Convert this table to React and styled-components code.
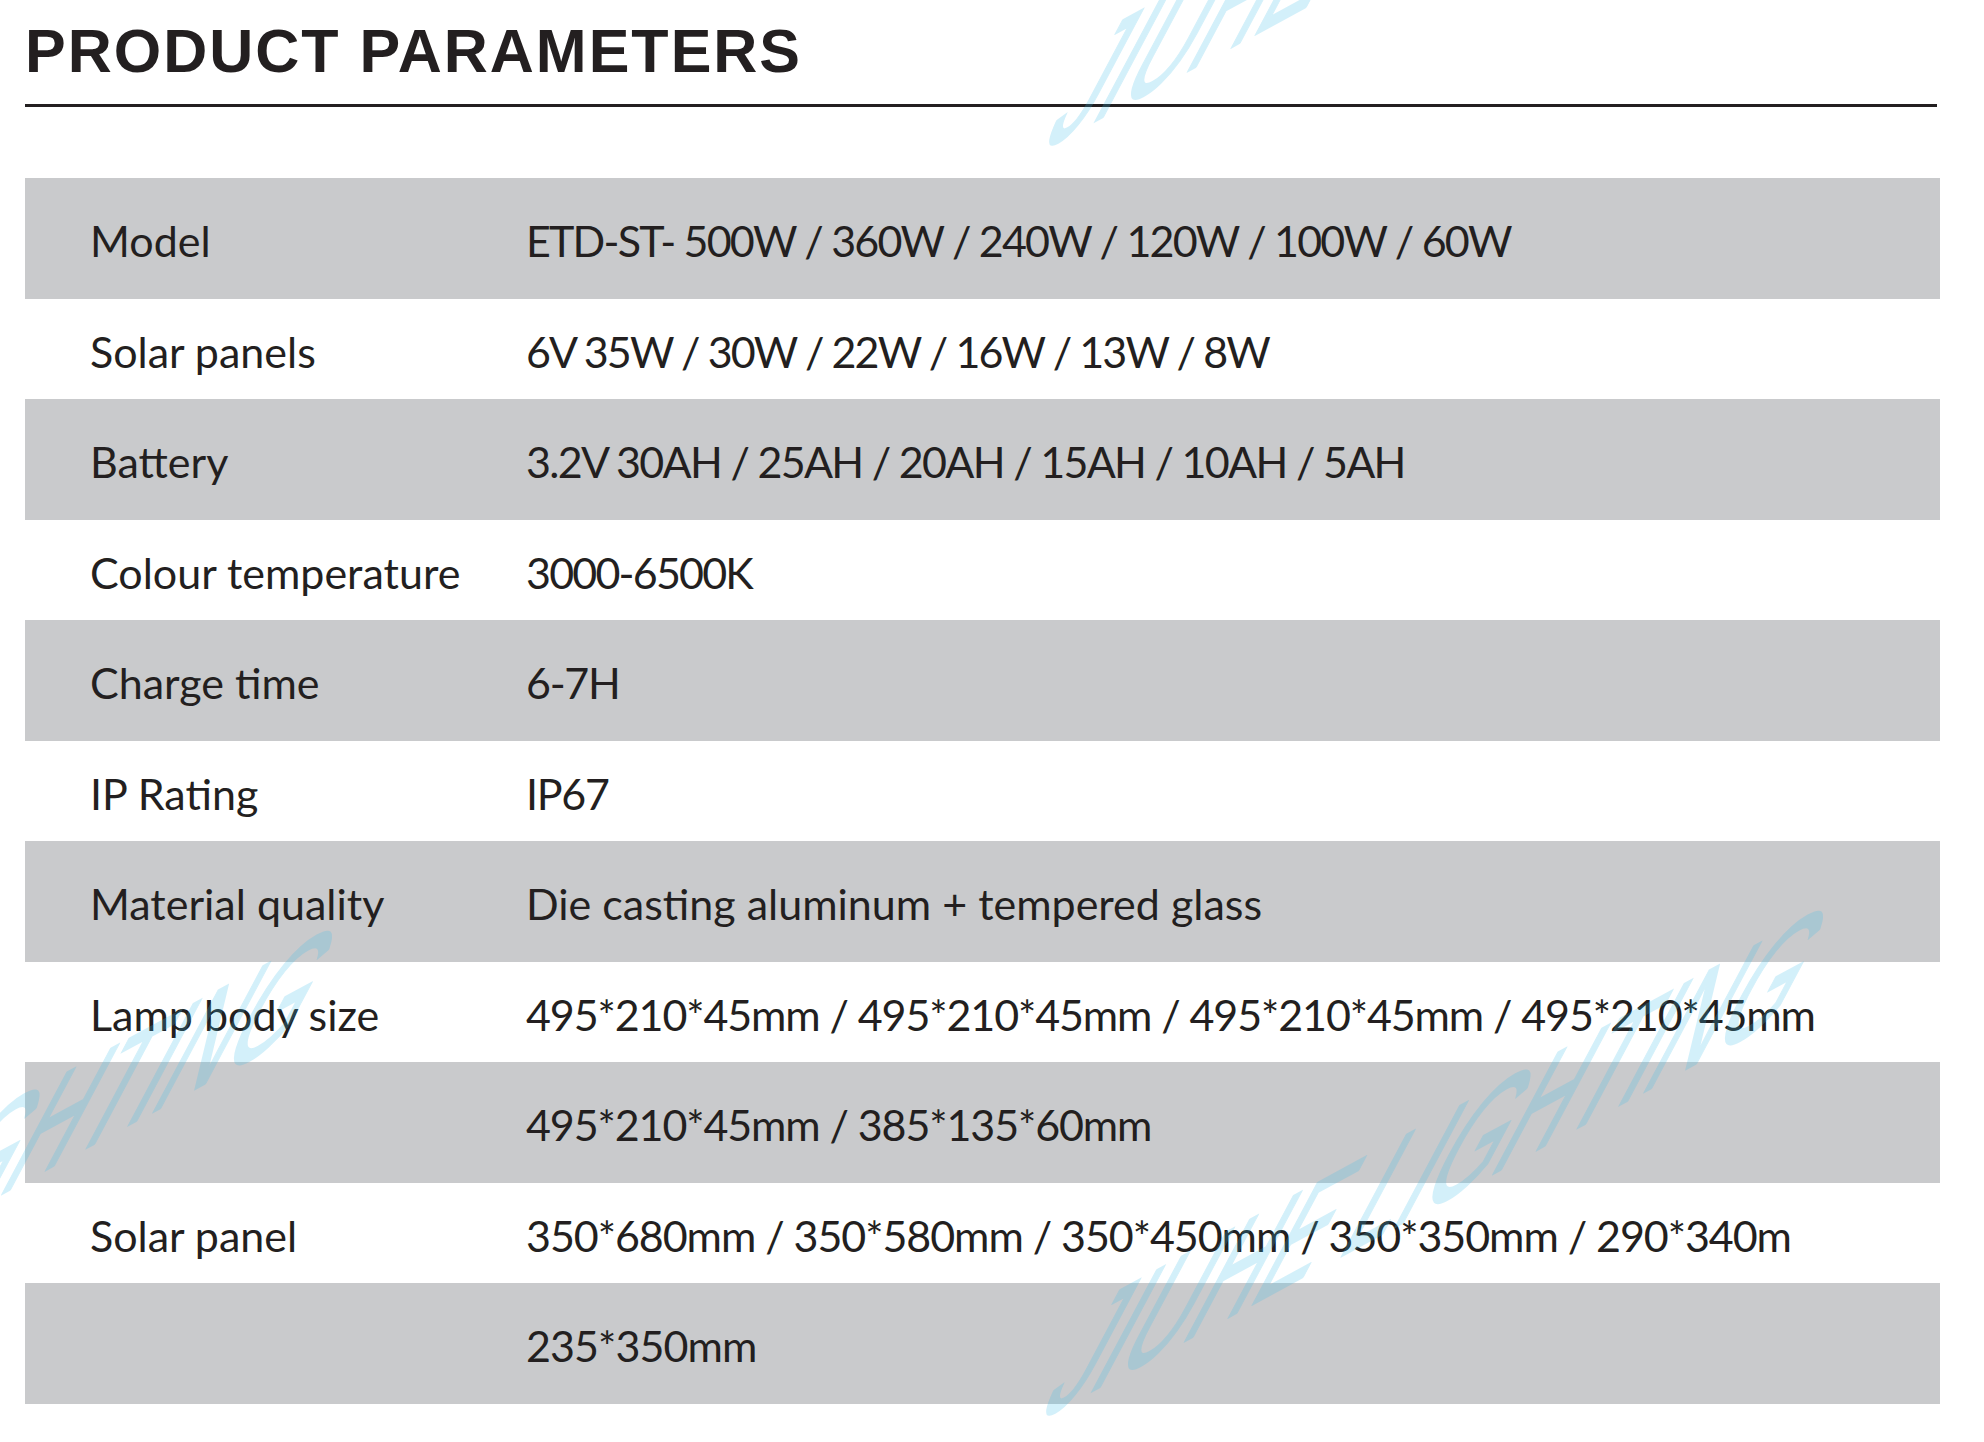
import React from 'react';
import styled, { createGlobalStyle } from 'styled-components';

const GlobalStyle = createGlobalStyle`
  html, body {
    margin: 0;
    padding: 0;
    background: #fff;
  }
  body {
    font-family: 'Lato', 'Open Sans', sans-serif;
    color: #231f20;
  }
`;

const Page = styled.div`
  position: relative;
  width: 1984px;
  height: 1442px;
  box-sizing: border-box;
  padding: 21px 44px 0 25px;
  overflow: hidden;
  background: #fff;
`;

const Title = styled.h1`
  margin: 0;
  font-family: 'Liberation Sans', Arial, sans-serif;
  font-weight: 700;
  font-size: 61px;
  line-height: 61px;
  letter-spacing: 2px;
  color: #231f20;
`;

const Rule = styled.div`
  margin: 22px 3px 0 0;
  height: 3px;
  background: #231f20;
`;

const Table = styled.div`
  margin-top: 71px;
  display: flex;
  flex-direction: column;
`;

const Row = styled.div`
  display: grid;
  grid-template-columns: 501px 1fr;
  align-items: center;
  box-sizing: border-box;
  height: ${p => (p.$shaded ? 121 : 100)}px;
  padding-top: 4px;
  background: ${p => (p.$shaded ? '#c9cacc' : 'transparent')};
  font-size: 43px;
  white-space: nowrap;
`;

const Label = styled.div`
  padding-left: 65px;
`;

const Value = styled.div`
  letter-spacing: ${p => p.$spacing}px;
`;

const Watermark = styled.svg`
  position: absolute;
  left: 0;
  top: 0;
  width: 1984px;
  height: 1442px;
  pointer-events: none;
`;

const Mark = styled.text`
  font-family: 'Liberation Sans', Arial, sans-serif;
  font-weight: 400;
  font-size: 100px;
  fill: rgb(60, 190, 235);
  stroke: rgb(60, 190, 235);
  stroke-width: 1.5px;
  stroke-linejoin: round;
  opacity: 0.22;
`;

// label, value, letter-spacing of the value
const rows = [
  ['Model', 'ETD-ST- 500W / 360W / 240W / 120W / 100W / 60W', -1.8],
  ['Solar panels', '6V 35W / 30W / 22W / 16W / 13W / 8W', -1.9],
  ['Battery', '3.2V 30AH / 25AH / 20AH / 15AH / 10AH / 5AH', -1.7],
  ['Colour temperature', '3000-6500K', -1.8],
  ['Charge time', '6-7H', -1.3],
  ['IP Rating', 'IP67', -1.3],
  ['Material quality', 'Die casting aluminum + tempered glass', 0],
  ['Lamp body size', '495*210*45mm / 495*210*45mm / 495*210*45mm / 495*210*45mm', -1.1],
  ['', '495*210*45mm / 385*135*60mm', -1.1],
  ['Solar panel', '350*680mm / 350*580mm / 350*450mm / 350*350mm / 290*340m', -1.05],
  ['', '235*350mm', -0.9],
];

// where each copy of the watermark starts (baseline, left)
const marks = [
  [1036, 1422],
  [1039, 152],
  [-455, 1442],
];

const App = () => {
  return (
    <Page>
      <GlobalStyle />
      <Title>PRODUCT PARAMETERS</Title>
      <Rule />
      <Table>
        {rows.map(([label, value, spacing], index) => (
          <Row key={index} $shaded={index % 2 === 0}>
            <Label>{label}</Label>
            <Value $spacing={spacing}>{value}</Value>
          </Row>
        ))}
      </Table>
      <Watermark viewBox="0 0 1984 1442">
        {marks.map(([x, y], index) => (
          <Mark key={index} x="0" y="0" transform={`matrix(0.94 -0.51 -0.939 1.766 ${x} ${y})`}>
            JIUHE LIGHTING
          </Mark>
        ))}
      </Watermark>
    </Page>
  );
};

export default App;
